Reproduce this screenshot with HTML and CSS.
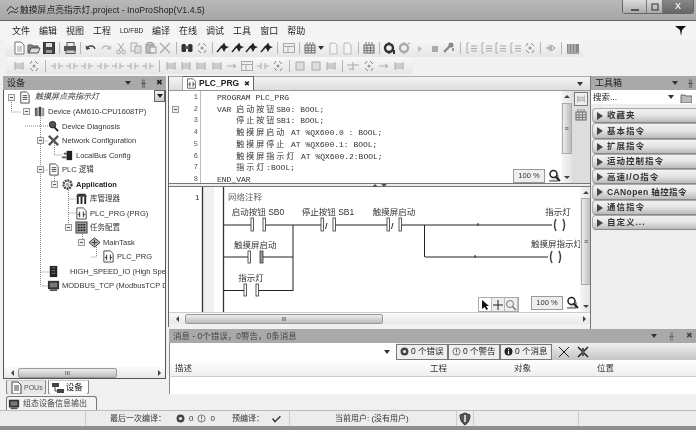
FILE: index.html
```html
<!DOCTYPE html>
<html lang="zh">
<head>
<meta charset="utf-8">
<title>InoProShop</title>
<link rel="stylesheet" href="styles.css">
</head>
<body>
<svg class="defs" width="0" height="0">
  <defs>
    <symbol id="new" viewBox="0 0 14 14"><path d="M3 1h6l3 3v9H3z" fill="#fff" stroke="#777"/><path d="M5 6h5M5 8h5M5 10h5" stroke="#999"/></symbol>
    <symbol id="open" viewBox="0 0 14 14"><path d="M1 4h4l1 1h5v2H4l-2 5H1z" fill="#888" stroke="#555"/><path d="M4 7h9l-2 5H2z" fill="#ddd" stroke="#555"/></symbol>
    <symbol id="save" viewBox="0 0 14 14"><rect x="1.5" y="1.5" width="11" height="11" fill="#444" stroke="#333"/><rect x="4" y="2" width="6" height="4" fill="#ddd"/><rect x="4" y="9" width="6" height="3" fill="#999"/></symbol>
    <symbol id="print" viewBox="0 0 14 14"><rect x="4" y="1.5" width="7" height="4" fill="#eee" stroke="#555"/><rect x="1" y="5" width="12" height="5" fill="#555"/><rect x="3" y="9" width="9" height="3.5" fill="#ccc" stroke="#555"/></symbol>
    <symbol id="undo" viewBox="0 0 14 14"><path d="M3 8a4 3 0 0 1 7-2l1 2" fill="none" stroke="#444" stroke-width="1.4"/><path d="M1.5 4.5l1 4.5 4-1.5z" fill="#444"/></symbol>
    <symbol id="redo" viewBox="0 0 14 14"><path d="M11 8a4 3 0 0 0-7-2L3 8" fill="none" stroke="#bbb" stroke-width="1.4"/><path d="M12.5 4.5l-1 4.5-4-1.5z" fill="#bbb"/></symbol>
    <symbol id="cut" viewBox="0 0 14 14"><path d="M4 2l5 7M10 2L5 9" stroke="#aaa" fill="none"/><circle cx="4.5" cy="11" r="1.8" fill="none" stroke="#aaa"/><circle cx="9.5" cy="11" r="1.8" fill="none" stroke="#aaa"/></symbol>
    <symbol id="copy" viewBox="0 0 14 14"><rect x="2" y="2" width="6" height="8" fill="#eee" stroke="#aaa"/><rect x="6" y="5" width="6" height="7" fill="#ddd" stroke="#aaa"/></symbol>
    <symbol id="paste" viewBox="0 0 14 14"><rect x="2" y="3" width="8" height="9" fill="#bbb" stroke="#999"/><rect x="4" y="1.5" width="4" height="2.5" fill="#ddd" stroke="#999"/><rect x="6" y="6" width="6" height="6" fill="#eee" stroke="#999"/></symbol>
    <symbol id="del" viewBox="0 0 14 14"><path d="M2 2l10 10M12 2L2 12" stroke="#aaa" stroke-width="1.3"/></symbol>
    <symbol id="find" viewBox="0 0 14 14"><rect x="1.5" y="3" width="4.5" height="8" rx="1.5" fill="#333"/><rect x="8" y="3" width="4.5" height="8" rx="1.5" fill="#333"/><rect x="5" y="5" width="4" height="3" fill="#555"/></symbol>
    <symbol id="repl" viewBox="0 0 14 14"><path d="M3 5l2-3M8 2l3 3M3 9l3 3M9 12l2-3" stroke="#888" fill="none"/><circle cx="7" cy="7" r="1.5" fill="#999"/></symbol>
    <symbol id="bp" viewBox="0 0 14 14"><path d="M1 11L7 4" stroke="#222" stroke-width="1.4"/><path d="M8 1.5l1.8 3.5L13 6 9.8 7.5 8 11 6.2 7.5 3.5 6l2.7-1z" fill="#222"/></symbol>
    <symbol id="box" viewBox="0 0 14 14"><rect x="1.5" y="2.5" width="11" height="9" fill="#eee" stroke="#aaa"/><path d="M1.5 5.5h11M6 5.5v6" stroke="#aaa"/></symbol>
    <symbol id="tbl" viewBox="0 0 14 14"><rect x="2" y="4" width="10" height="8" fill="#ddd" stroke="#666"/><path d="M2 7h10M2 9.5h10M5 4v8M8.5 4v8M4 1v3M7 1v3M10 1v3" stroke="#777"/></symbol>
    <symbol id="docb" viewBox="0 0 14 14"><path d="M4 2h5l2 2v9H4z" fill="#f4f4f4" stroke="#bbb"/></symbol>
    <symbol id="gear" viewBox="0 0 14 14"><circle cx="6" cy="7" r="4" fill="none" stroke="#333" stroke-width="2.4"/><path d="M6 1v2M6 11v2M1 7h2M9 7h2M2.5 3.5l1.5 1.5M8 9l1.5 1.5M9.500 3.500L8 5M4 9l-1.500 1.500" stroke="#333" stroke-width="1.300"/><path d="M11 9v4" stroke="#333" stroke-width="2"/></symbol>
    <symbol id="gearl" viewBox="0 0 14 14"><circle cx="6" cy="7" r="4" fill="none" stroke="#aaa" stroke-width="2.400"/><path d="M6 1v2M6 11v2M1 7h2M9 7h2M10 2l2 1" stroke="#aaa" stroke-width="1.300"/></symbol>
    <symbol id="play" viewBox="0 0 14 14"><path d="M5 5l4 3-4 3z" fill="#bbb"/></symbol>
    <symbol id="stop" viewBox="0 0 14 14"><rect x="4" y="5" width="6" height="6" fill="#aaa"/></symbol>
    <symbol id="tool" viewBox="0 0 14 14"><path d="M2 11L8 5" stroke="#888" stroke-width="2.400"/><circle cx="9" cy="4" r="2.500" fill="#888"/><rect x="10" y="7" width="2" height="3" fill="#999"/></symbol>
    <symbol id="brk" viewBox="0 0 14 14"><path d="M5 2H3v10h2M7 5h6M7 7.500h6M7 10h6" fill="none" stroke="#aaa"/></symbol>
    <symbol id="arr" viewBox="0 0 14 14"><path d="M2 7h6M5 4.500v5M7 4l4 3-4 3z" fill="none" stroke="#999"/></symbol>
    <symbol id="bars" viewBox="0 0 14 14"><rect x="1" y="3" width="12" height="8" fill="#888"/><path d="M3 3v8M6 3v8M9 3v8" stroke="#ccc"/><path d="M1 12h12" stroke="#555"/></symbol>
    <symbol id="ct" viewBox="0 0 14 14"><path d="M1 7h4M9 7h4M5 4v6M9 4v6" stroke="#aaa" fill="none"/></symbol>
    <symbol id="rung" viewBox="0 0 14 14"><path d="M3 3v8M3 5h8M3 7h8M3 9h8M11 3v8" stroke="#aaa" fill="none"/></symbol>
    <symbol id="line" viewBox="0 0 14 14"><path d="M2 7h9M8 5l3 2-3 2" stroke="#aaa" fill="none"/></symbol>
    <symbol id="sq" viewBox="0 0 14 14"><rect x="3" y="3" width="8" height="8" fill="#ddd" stroke="#aaa"/></symbol>
    <symbol id="tee" viewBox="0 0 14 14"><path d="M1 6h12M7 3v8M3 10h5" stroke="#aaa" fill="none"/></symbol>
    <symbol id="mon" viewBox="0 0 14 14"><rect x="1" y="2" width="12" height="9" fill="#333"/><rect x="3" y="4" width="8" height="5" fill="#777"/><rect x="3" y="11" width="8" height="2" fill="#555"/></symbol>
    <symbol id="gr" viewBox="0 0 14 14"><rect x="2" y="3" width="3" height="9" fill="#666"/><rect x="6" y="2" width="3" height="10" fill="#444"/><rect x="10" y="3" width="2" height="9" fill="#888"/></symbol>
    <symbol id="doc" viewBox="0 0 14 14"><path d="M3 1h6l3 3v9H3z" fill="#fff" stroke="#444"/><path d="M5 5h5M5 7h5M5 9h5" stroke="#444"/></symbol>
    <symbol id="net" viewBox="0 0 14 14"><path d="M2 12L12 2M2 2l10 10" stroke="#555" stroke-width="2.500"/></symbol>
    <symbol id="devs" viewBox="0 0 14 14"><rect x="1" y="2" width="7" height="4" fill="#444"/><rect x="6" y="8" width="7" height="4" fill="#444"/><path d="M4 6v4h2" stroke="#444" fill="none"/></symbol>
    <symbol id="cog" viewBox="0 0 14 14"><circle cx="7" cy="7" r="4.300" fill="none" stroke="#444" stroke-width="2.500" stroke-dasharray="2 .8"/><circle cx="7" cy="7" r="2" fill="#aaa"/></symbol>
    <symbol id="lens" viewBox="0 0 14 14"><circle cx="6" cy="5" r="3.500" fill="#555" stroke="#222"/><path d="M8 8l4 4" stroke="#222" stroke-width="2"/></symbol>
    <symbol id="plug" viewBox="0 0 14 14"><rect x="6" y="2" width="6" height="10" fill="#222"/><path d="M1 9h5M3 5h3" stroke="#555" stroke-width="2"/></symbol>
    <symbol id="lib" viewBox="0 0 14 14"><path d="M1 5l2-3h8l2 3z" fill="#333"/><path d="M2 5h2v8H2zM6 5h2v8H6zM10 5h2v8h-2z" fill="#222"/></symbol>
    <symbol id="prg" viewBox="0 0 14 14"><path d="M2 1h7l3 3v9H2z" fill="#fff" stroke="#444"/><path d="M3 8h2M9 8h2M5 5v6M9 5v6" stroke="#222"/></symbol>
    <symbol id="tasks" viewBox="0 0 14 14"><rect x="1" y="1" width="12" height="12" fill="#999" stroke="#444"/><path d="M3 4h8M3 7h8M3 10h8" stroke="#222" stroke-width="1.500" stroke-dasharray="2 1"/></symbol>
    <symbol id="task" viewBox="0 0 14 14"><path d="M1 7l6-5 6 5-6 5z" fill="#bbb" stroke="#333"/><path d="M4 7h6M7 4v6" stroke="#333"/></symbol>
    <symbol id="stk" viewBox="0 0 14 14"><rect x="3" y="1" width="8" height="12" fill="#222"/><path d="M5 3h4M5 6h4M5 9h4" stroke="#777"/></symbol>
    <symbol id="zm" viewBox="0 0 14 14"><path d="M2 12h9V6" fill="#ddd" stroke="#444"/><circle cx="6.500" cy="5" r="3.500" fill="#fff" stroke="#222" stroke-width="1.500"/><path d="M9 8l4 4" stroke="#222" stroke-width="2"/></symbol>
    <symbol id="err" viewBox="0 0 14 14"><circle cx="7" cy="7" r="5" fill="#444"/><circle cx="7" cy="7" r="2" fill="#eee"/></symbol>
    <symbol id="warn" viewBox="0 0 14 14"><circle cx="7" cy="7" r="4.500" fill="#eee" stroke="#555"/><path d="M7 4v4M7 9v1" stroke="#444"/></symbol>
    <symbol id="info" viewBox="0 0 14 14"><circle cx="7" cy="7" r="5" fill="#222"/><path d="M7 3.500v1.500M7 6v4.500" stroke="#fff" stroke-width="1.500"/></symbol>
  </defs>
</svg>

<div class="app">
  <header class="title">
    <svg class="i" viewBox="0 0 14 14"><path d="M2 8q3-7 6-3t5-1M3 11q3-4 6-2t4-1" fill="none" stroke="#333"/></svg>
    <span class="title-text">触摸屏点亮指示灯.project - InoProShop(V1.4.5)</span>
    <div class="winbtns">
      <span class="wb"><svg viewBox="0 0 10 10"><path d="M1 8h8" stroke="#333" stroke-width="1.500"/></svg></span>
      <span class="wb mid"><svg viewBox="0 0 10 10"><rect x="2" y="2" width="6" height="6" fill="none" stroke="#333"/></svg></span>
      <span class="wb close">X</span>
    </div>
  </header>

  <nav class="menu">
    <span>文件</span><span>编辑</span><span>视图</span><span>工程</span><span class="small">LD/FBD</span><span>编译</span><span>在线</span><span>调试</span><span>工具</span><span>窗口</span><span>帮助</span>
    <svg class="funnel" viewBox="0 0 12 12"><path d="M0 1h11L7 5l-1 6-1-6z" fill="#111"/></svg>
  </nav>

  <div class="tb tb1">
    <svg class="i"><use href="#new"/></svg><svg class="i"><use href="#open"/></svg><svg class="i"><use href="#save"/></svg><b></b>
    <svg class="i"><use href="#print"/></svg><b></b>
    <svg class="i"><use href="#undo"/></svg><svg class="i"><use href="#redo"/></svg><svg class="i"><use href="#cut"/></svg><svg class="i"><use href="#copy"/></svg><svg class="i"><use href="#paste"/></svg><svg class="i"><use href="#del"/></svg><b></b>
    <svg class="i"><use href="#find"/></svg><svg class="i"><use href="#repl"/></svg><b></b>
    <svg class="i"><use href="#bp"/></svg><svg class="i"><use href="#bp"/></svg><svg class="i"><use href="#bp"/></svg><svg class="i"><use href="#bp"/></svg><b></b>
    <svg class="i"><use href="#box"/></svg><b></b>
    <svg class="i"><use href="#tbl"/></svg><i class="drop"></i><svg class="i"><use href="#docb"/></svg><svg class="i"><use href="#docb"/></svg><b></b>
    <svg class="i"><use href="#tbl"/></svg><b></b>
    <svg class="i"><use href="#gear"/></svg><svg class="i"><use href="#gearl"/></svg><svg class="i"><use href="#play"/></svg><svg class="i"><use href="#stop"/></svg><svg class="i"><use href="#tool"/></svg><b></b>
    <svg class="i"><use href="#brk"/></svg><svg class="i"><use href="#brk"/></svg><svg class="i"><use href="#brk"/></svg><svg class="i"><use href="#brk"/></svg><svg class="i"><use href="#repl"/></svg><b></b>
    <svg class="i"><use href="#arr"/></svg><b></b>
    <svg class="i"><use href="#bars"/></svg>
  </div>

  <div class="tb tb2">
    <svg class="i"><use href="#rung"/></svg><svg class="i"><use href="#repl"/></svg><b></b>
    <svg class="i"><use href="#ct"/></svg><svg class="i"><use href="#ct"/></svg><svg class="i"><use href="#ct"/></svg><svg class="i"><use href="#ct"/></svg><svg class="i"><use href="#ct"/></svg><svg class="i"><use href="#ct"/></svg><svg class="i"><use href="#ct"/></svg><b></b>
    <svg class="i"><use href="#rung"/></svg><svg class="i"><use href="#rung"/></svg><svg class="i"><use href="#rung"/></svg><svg class="i"><use href="#rung"/></svg><svg class="i"><use href="#line"/></svg><svg class="i"><use href="#box"/></svg><svg class="i"><use href="#ct"/></svg><svg class="i"><use href="#repl"/></svg><b></b>
    <svg class="i"><use href="#sq"/></svg><svg class="i"><use href="#sq"/></svg><svg class="i"><use href="#rung"/></svg><b></b>
    <svg class="i"><use href="#tee"/></svg><svg class="i"><use href="#repl"/></svg><svg class="i"><use href="#line"/></svg><svg class="i"><use href="#rung"/></svg>
  </div>

  <main class="main">
    <section class="left">
      <div class="phead"><span>设备</span><span class="pctl"><i class="drop"></i><span class="pin">╫</span><span class="x">✖</span></span></div>
      <div class="tree">
        <svg class="tree-lines" width="110" height="210">
          <path d="M7.500 8v14h10M36.500 22v174M21 36h23M36.500 51h8M36.500 80h8M36.500 182h12M36.500 196h8M50.500 51v14h8M50.500 80v14M64.500 94v44M64.500 109h8M64.500 123h8M78.500 138v15M92.500 153v14h-6" fill="none" stroke="#888" stroke-dasharray="1 1"/>
        </svg>
        <div class="row l0"><i class="tg"></i><svg class="i"><use href="#doc"/></svg><em class="root">触摸屏点亮指示灯</em></div>
        <div class="row l1"><i class="tg"></i><svg class="i"><use href="#gr"/></svg><span>Device (AM610-CPU1608TP)</span></div>
        <div class="row l2"><i class="tg none"></i><svg class="i"><use href="#lens"/></svg><span>Device Diagnosis</span></div>
        <div class="row l2"><i class="tg"></i><svg class="i"><use href="#net"/></svg><span>Network Configuration</span></div>
        <div class="row l3"><i class="tg none"></i><svg class="i"><use href="#plug"/></svg><span>LocalBus Config</span></div>
        <div class="row l2"><i class="tg"></i><svg class="i"><use href="#doc"/></svg><span>PLC 逻辑</span></div>
        <div class="row l3"><i class="tg"></i><svg class="i"><use href="#cog"/></svg><strong>Application</strong></div>
        <div class="row l4"><i class="tg none"></i><svg class="i"><use href="#lib"/></svg><span>库管理器</span></div>
        <div class="row l4"><i class="tg none"></i><svg class="i"><use href="#prg"/></svg><span>PLC_PRG (PRG)</span></div>
        <div class="row l4"><i class="tg"></i><svg class="i"><use href="#tasks"/></svg><span>任务配置</span></div>
        <div class="row l5"><i class="tg"></i><svg class="i"><use href="#task"/></svg><span>MainTask</span></div>
        <div class="row l6"><i class="tg none"></i><svg class="i"><use href="#prg"/></svg><span>PLC_PRG</span></div>
        <div class="row l2x"><i class="tg none"></i><svg class="i"><use href="#stk"/></svg><span>HIGH_SPEED_IO (High Speed IO Module)</span></div>
        <div class="row l2"><i class="tg none"></i><svg class="i"><use href="#mon"/></svg><span>MODBUS_TCP (ModbusTCP Device)</span></div>
        <i class="tree-drop"></i>
      </div>
      <div class="hscroll hs-left"><i class="la"></i><div class="thumb">III</div><i class="ra"></i></div>
      <div class="ltabs">
        <span class="ltab"><svg class="i"><use href="#doc"/></svg><small>POUs</small></span>
        <span class="ltab on"><svg class="i"><use href="#devs"/></svg>设备</span>
      </div>
    </section>

    <section class="center">
      <div class="tabstrip">
        <div class="tab"><svg class="i"><use href="#prg"/></svg><b>PLC_PRG</b><span class="tx">✖</span></div>
        <i class="drop end"></i>
      </div>
      <div class="code-pane">
        <div class="fold"><i class="tg"></i></div>
        <ol class="nums"><li>1</li><li>2</li><li>3</li><li>4</li><li>5</li><li>6</li><li>7</li><li>8</li></ol>
        <pre class="code">PROGRAM PLC_PRG
VAR <span class="cj">启动按钮</span>SB0: BOOL;
    <span class="cj">停止按钮</span>SB1: BOOL;
    <span class="cj">触摸屏启动</span> AT %QX600.0 : BOOL;
    <span class="cj">触摸屏停止</span> AT %QX600.1: BOOL;
    <span class="cj">触摸屏指示灯</span> AT %QX600.2:BOOL;
    <span class="cj">指示灯</span>:BOOL;
END_VAR</pre>
        <div class="vscroll vs-top"><i class="ua"></i><div class="vthumb">≡</div><i class="da"></i></div>
        <div class="side">
          <svg class="i sbtn"><use href="#rung"/></svg>
          <svg class="i"><use href="#tbl"/></svg>
        </div>
        <div class="zoombox zb-top"><span>100 %</span><svg class="i"><use href="#zm"/></svg></div>
      </div>
      <div class="divider"><i></i><i class="dn"></i></div>
      <div class="ladder">
        <svg class="lad" width="422" height="126" viewBox="169 185 422 126">
          <rect x="203" y="185" width="11" height="126" fill="#f0f0f0"/>
          <path d="M202.500 185v125M223.500 185v126" stroke="#333" stroke-width="1.300"/>
          <text x="195" y="198" class="ln">1</text>
          <text x="228" y="198" class="lb gray">网络注释</text>
          <text x="258" y="213" class="lb c">启动按钮 SB0</text>
          <text x="328" y="213" class="lb c">停止按钮 SB1</text>
          <text x="394" y="213" class="lb c">触摸屏启动</text>
          <text x="558" y="213" class="lb c">指示灯</text>
          <text x="531" y="245" class="lb">触摸屏指示灯</text>
          <text x="234" y="246" class="lb">触摸屏启动</text>
          <text x="251" y="279" class="lb c">指示灯</text>
          <path d="M224 223h28M264 223h58M334 223h54M400 223h152M424.500 223v32M425 255h123M224 255h24M262 255h31M224 288.500h21M258 288.500h35M293 223v66" fill="none" stroke="#222"/>
          <path d="M478 221v3M475 253v3" stroke="#222"/>
          <g class="bar"><rect x="251" y="216" width="2.500" height="13"/><rect x="263" y="216" width="2.500" height="13"/><rect x="321" y="216" width="2.500" height="13"/><rect x="333" y="216" width="2.500" height="13"/><rect x="387" y="216" width="2.500" height="13"/><rect x="399" y="216" width="2.500" height="13"/><rect x="248" y="249" width="2.500" height="12"/><rect x="260" y="249" width="3" height="12" class="thick"/><rect x="244" y="282" width="2.500" height="12"/><rect x="256" y="282" width="2.500" height="12"/></g>
          <path d="M327 221l-1.500 6M393 221l-1.500 6" stroke="#333"/>
          <path d="M556 217q-3 6 0 12M563 217q3 6 0 12M552 249q-3 6 0 12M559 249q3 6 0 12" fill="none" stroke="#444" stroke-width="1.500"/>
        </svg>
        <div class="vscroll vs-lad"><i class="ua"></i><div class="vthumb">≡</div><i class="da"></i></div>
        <div class="mode"><span class="on"><svg viewBox="0 0 12 12" width="12" height="12"><path d="M3 1v9l2.500-2 2 3 1.500-1-2-3h3z" fill="#111"/></svg></span><span><svg viewBox="0 0 12 12" width="12" height="12"><path d="M6 1v10M1 6h10" stroke="#222"/></svg></span><span><svg viewBox="0 0 12 12" width="12" height="12"><circle cx="5" cy="5" r="3.500" fill="#eee" stroke="#777"/><path d="M7.500 7.500l3.500 3.500" stroke="#777" stroke-width="1.500"/></svg></span></div>
        <div class="zoombox zb-lad"><span>100 %</span><svg class="i"><use href="#zm"/></svg></div>
      </div>
      <div class="hscroll hs-lad"><i class="la"></i><div class="thumb">III</div><i class="ra"></i></div>
    </section>

    <aside class="right">
      <div class="phead"><span>工具箱</span><span class="pctl"><i class="drop"></i><span class="pin">╫</span></span></div>
      <div class="search"><span>搜索...</span><i class="drop"></i><svg class="i"><path d="M1 4h4l1 1h6v7H1z" fill="#bbb" stroke="#666"/></svg></div>
      <ul class="tools">
        <li>收藏夹</li><li>基本指令</li><li>扩展指令</li><li>运动控制指令</li><li>高速I/O指令</li><li class="tight">CANopen 轴控指令</li><li>通信指令</li><li>自定义...</li>
      </ul>
    </aside>

    <section class="msgs">
      <div class="phead mh"><span>消息 - 0个错误，0警告，0条消息</span><span class="pctl"><i class="drop"></i><span class="pin">╫</span><span class="x">✖</span></span></div>
      <div class="mtool">
        <div class="mcombo"><i class="drop"></i></div>
        <div class="mbtns">
          <span class="mb"><svg class="i"><use href="#err"/></svg>0 个错误</span>
          <span class="mb"><svg class="i"><use href="#warn"/></svg>0 个警告</span>
          <span class="mb"><svg class="i"><use href="#info"/></svg>0 个消息</span>
          <svg class="i mx"><path d="M2 2l10 10M12 2L2 12" stroke="#222"/></svg>
          <svg class="i mx"><path d="M2 2l10 10M12 2L2 12" stroke="#222" stroke-width="1.500"/><path d="M7 3v8" stroke="#555" stroke-width="2"/></svg>
        </div>
      </div>
      <div class="mhead"><span class="c1">描述</span><span class="c2">工程</span><span class="c3">对象</span><span class="c4">位置</span></div>
      <div class="mbody"></div>
    </section>
  </main>

  <div class="outbar"><span class="otab"><svg class="i"><use href="#mon"/></svg>组态设备信息输出</span></div>

  <footer class="status">
    <div class="s1"></div>
    <div class="s2"><span>最后一次编译：</span><svg class="i"><use href="#err"/></svg><span>0</span><svg class="i"><use href="#warn"/></svg><span>0</span><span class="pre">预编译：</span><svg class="i" viewBox="0 0 14 14"><path d="M2 7l3 4 7-7" fill="none" stroke="#333" stroke-width="1.800"/></svg></div>
    <div class="s3"><span>当前用户: (没有用户)</span></div>
    <div class="s4"><svg class="i" viewBox="0 0 14 14"><path d="M7 1l5 2q0 7-5 10Q2 10 2 3z" fill="#555" stroke="#333"/><path d="M7 3v7" stroke="#ccc" stroke-width="2"/></svg></div>
    <div class="s5"></div>
    <div class="s6"></div>
  </footer>
</div>
</body>
</html>
```

FILE: styles.css
```css
* { box-sizing: border-box; }
html, body { margin: 0; padding: 0; background: #9a9a9a; }
.defs { position: absolute; }
.app {
  width: 696px; height: 430px; overflow: hidden;
  display: flex; flex-direction: column;
  background: #f1f1f1;
  font: 8.500px/1 "Liberation Sans", "Noto Sans CJK SC", sans-serif;
  color: #333;
  filter: blur(0.35px);
  border-bottom: 4px solid #8e8e8e;
}
i { font-style: normal; display: block; }
.i { width: 14px; height: 14px; flex: none; display: block; }

.drop { width: 0; height: 0; border: 3px solid transparent; border-top: 4px solid #333; border-bottom: 0; flex: none; }

/* title */
.title { height: 21px; flex: none; display: flex; align-items: center; padding-left: 5px; gap: 1px;
  background: linear-gradient(#b9b9b9, #a6a6a6); border-bottom: 1px solid #666; position: relative; }
.title-text { font-size: 8.800px; color: #222; margin-left: 0; white-space: nowrap; }
.winbtns { margin-left: auto; margin-right: 2px; display: flex; align-self: flex-start; border: 1px solid #666; border-top: 0; border-radius: 0 0 3px 3px; height: 14px; }
.wb { width: 24px; height: 13px; display: flex; align-items: center; justify-content: center; background: linear-gradient(#dcdcdc, #aaa); border-right: 1px solid #777; }
.wb.mid { width: 16px; }
.wb svg { width: 10px; height: 10px; }
.wb.close { width: 30px; border: 0; background: linear-gradient(#888, #666); color: #eee; font-size: 9px; font-weight: bold; }

/* menu */
.menu { height: 18px; flex: none; display: flex; align-items: center; padding-left: 12px; gap: 9px; font-size: 9px; color: #222; background: #f4f4f4; position: relative; padding-top: 3px; }
.menu .small { font-size: 6.500px; width: 23px; }
.funnel { width: 12px; height: 12px; margin-left: auto; margin-right: 9px; margin-top: -2px; }

/* toolbars */
.tb { flex: none; display: flex; align-items: center; background: linear-gradient(#f8f8f8, #e6e6e6); margin-left: 6px; border-radius: 2px; gap: .8px; padding-left: 6px; }
.tb b { width: 1px; height: 12px; background: #b5b5b5; margin: 0 2.400px; flex: none; }
.tb1 { height: 18px; width: 577px; }
.tb1 .drop { margin-right: 1px; }
.tb2 { height: 17px; width: 407px; margin-bottom: 2px; gap: 1.300px; }

/* main grid */
.main { flex: 1; min-height: 0; margin-left: 3px; display: grid;
  grid-template-columns: 163px 424px 106px; grid-template-rows: 253px 66px; column-gap: 0; }
.phead { height: 14px; background: #a9a9a9; display: flex; align-items: center; padding: 0 3px 0 4px; color: #222; font-size: 9px; flex: none; }
.pctl { margin-left: auto; display: flex; align-items: center; gap: 10px; font-size: 8px; }
.pin { font-size: 7px; }
.x { font-size: 8px; }

/* left */
.left { grid-row: 1 / 3; grid-column: 1; display: flex; flex-direction: column; }
.tree { height: 277px; background: #fff; border-left: 1px solid #555; border-right: 1px solid #555; position: relative; overflow: hidden; padding-top: 0; }
.tree-lines { position: absolute; left: 0; top: 0; }
.tree-drop { position: absolute; right: 0; top: 0; width: 11px; height: 12px; border: 1px solid #666; background: linear-gradient(#eee,#ccc); }
.tree-drop::after { content: ""; position: absolute; left: 2px; top: 3px; border: 3px solid transparent; border-top: 4px solid #222; border-bottom: 0; }
.row { height: 14.530px; display: flex; align-items: center; white-space: nowrap; position: relative; font-size: 7.500px; color: #333; }
.row .i { width: 13px; height: 13px; }
.row span, .row strong, .row em { margin-left: 2px; }
.row strong { color: #222; }
.root { font-size: 8px; }
.l0 { padding-left: 4px; }
.l0 em { margin-left: 4px; }
.l1 { padding-left: 19px; }
.l2 { padding-left: 33px; }
.l2x { padding-left: 33px; }
.l2x span { margin-left: 10px; }
.l3 { padding-left: 47px; }
.l4 { padding-left: 61px; }
.l5 { padding-left: 74px; }
.l6 { padding-left: 88px; }
.tg { width: 7px; height: 7px; border: 1px solid #999; background: #eee; margin-right: 3px; position: relative; flex: none; }
.tg::after { content: ""; position: absolute; left: 1px; right: 1px; top: 2px; height: 1px; background: #555; }
.tg.none { visibility: hidden; }

.hscroll { display: flex; align-items: center; height: 11px; background: linear-gradient(#fafafa, #e8e8e8); flex: none; }
.hs-left { border: 1px solid #555; border-top: 0; height: 12px; }
.la { border: 3px solid transparent; border-right: 3px solid #444; border-left: 0; margin-left: 7px; }
.ra { border: 3px solid transparent; border-left: 3px solid #444; border-right: 0; margin-left: auto; margin-right: 4px; }
.thumb { height: 10px; border: 1px solid #999; border-radius: 2px; background: linear-gradient(#eee, #bbb); font-size: 6px; line-height: 9px; text-align: center; color: #444; }
.hs-left .thumb { width: 99px; margin-left: 4px; }
.hs-lad { position: relative; }
.hs-lad .thumb { width: 198px; margin-left: 6px; }

.ltabs { display: flex; gap: 2px; padding: 1px 0 0 3px; }
.ltab { height: 15px; display: flex; align-items: center; gap: 1px; border: 1px solid #888; border-top-color: #ccc; border-radius: 0 0 3px 3px; padding: 0 2px; font-size: 8.500px; background: #e8e8e8; color: #222; }
.ltab small { font-size: 7px; color: #555; }
.ltab.on { background: #fff; padding-right: 5px; }

/* center */
.center { grid-column: 2; grid-row: 1; margin-left: 2px; border-left: 1px solid #666; display: flex; flex-direction: column; height: 251px; width: 422px; }
.tabstrip { height: 15px; background: linear-gradient(#f4f4f4, #ddd); border-top: 1px solid #aaa; border-bottom: 1px solid #999; display: flex; align-items: flex-end; padding-left: 13px; flex: none; }
.tab { height: 14px; display: flex; align-items: center; gap: 2px; padding: 0 3px 0 3px; background: #fff; border: 1px solid #666; border-bottom: 0; border-left-color: #aaa; font-size: 8.500px; color: #222; }
.tab .i { width: 11px; height: 11px; }
.tx { font-size: 7px; margin-left: 3px; }
.drop.end { margin-left: auto; margin-right: 7px; align-self: center; }

.code-pane { height: 93px; flex: none; display: flex; background: #fff; position: relative; border-bottom: 1px solid #777; overflow: hidden; }
.fold { width: 7px; margin-left: 3px; padding-top: 15px; }
.fold .tg { margin: 0; }
.nums { margin: 0; padding: 1px 2px 0 0; list-style: none; width: 22px; border-right: 1px solid #bbb; text-align: right; font: 7px/11.700px "Liberation Mono", monospace; color: #555; flex: none; }
.code { margin: 1px 0 0 16px; font: 8px/11.700px "Liberation Mono", "Noto Sans CJK SC", monospace; color: #333; flex: 1; }
.cj { letter-spacing: 2px; font-family: "Noto Sans CJK SC", sans-serif; line-height: 1; }
.vscroll { display: flex; flex-direction: column; align-items: center; background: linear-gradient(90deg, #f6f6f6, #e2e2e2); width: 11px; flex: none; }
.ua { border: 3px solid transparent; border-bottom: 3px solid #444; border-top: 0; margin-top: 4px; }
.da { border: 3px solid transparent; border-top: 3px solid #444; border-bottom: 0; margin-top: auto; margin-bottom: 4px; }
.vthumb { width: 10px; border: 1px solid #aaa; background: linear-gradient(90deg, #eee, #bbb); display: flex; align-items: center; justify-content: center; font-size: 7px; color: #444; }
.vs-top .vthumb { height: 51px; margin-top: 5px; }
.side { width: 18px; flex: none; display: flex; flex-direction: column; align-items: center; gap: 2px; padding-top: 1px; background: #ddd; }
.sbtn { border: 1px solid #777; background: #eee; }
.zoombox { position: absolute; display: flex; align-items: center; height: 14px; gap: 2px; }
.zoombox span { width: 32px; height: 14px; border: 1px solid #999; background: #eee; text-align: center; font-size: 7.500px; line-height: 12px; color: #333; }
.zb-top { right: 29px; bottom: 0; }
.zb-lad { right: 11px; bottom: 2px; }
.divider { height: 3px; background: #eee; border-bottom: 1px solid #777; flex: none; display: flex; justify-content: center; gap: 3px; padding-right: 0; }
.divider i { width: 0; height: 0; border: 3px solid transparent; border-bottom: 3px solid #555; border-top: 0; }
.divider .dn { border-top: 3px solid #555; border-bottom: 0; }

.ladder { height: 126px; flex: none; position: relative; display: flex; background: #fff; border-bottom: 1px solid #ccc; overflow: hidden; }
.lad { flex: none; display: block; margin-right: -11px; }
.ln { font: 8px "Liberation Sans", sans-serif; fill: #333; }
.lb { font: 8.500px "Liberation Sans", "Noto Sans CJK SC", sans-serif; fill: #333; }
.lb.gray { fill: #666; }
.c { text-anchor: middle; }
.bar rect { fill: #fff; stroke: #333; stroke-width: .8; }
.bar .thick { fill: #999; }
.vs-lad { width: 12px; margin-left: auto; position: relative; }
.vs-lad .vthumb { height: 87px; margin-top: 4px; }
.mode { position: absolute; left: 309px; bottom: 0; display: flex; height: 15px; border: 1px solid #aaa; background: #eee; }
.mode span { width: 13px; display: flex; align-items: center; justify-content: center; border-right: 1px solid #bbb; }
.mode .on { background: #fff; }

/* right */
.right { grid-column: 3; grid-row: 1; background: #eee; border-left: 1px solid #777; display: flex; flex-direction: column; margin-left: 0; height: 253px; }
.search { height: 14px; background: #fff; display: flex; align-items: center; padding-left: 2px; font-size: 8.500px; color: #222; flex: none; }
.search .drop { margin-left: auto; margin-right: 6px; }
.search .i { margin-right: 4px; width: 12px; height: 12px; }
.tools { list-style: none; margin: 4px 0 0 1px; padding: 0; }
.tools li { height: 15.300px; border: 1px solid #aaa; border-right: 0; border-bottom-color: #888; border-radius: 4px 0 0 4px; background: linear-gradient(#f2f2f2, #e6e6e6 45%, #bbb); display: flex; align-items: center; padding-left: 14px; font-weight: bold; font-size: 8.500px; letter-spacing: 1px; color: #333; position: relative; white-space: nowrap; }
.tools li.tight { letter-spacing: .4px; }
.tools li::before { content: ""; position: absolute; left: 4px; top: 3px; border: 4px solid transparent; border-left: 6px solid #444; border-right: 0; }

/* messages */
.msgs { grid-column: 2 / 4; grid-row: 2; margin-left: 3px; display: flex; flex-direction: column; width: 527px; margin-top: 0; }
.mh { padding-right: 3px; color: #444; font-size: 8.500px; padding-left: 4px; }
.mh .pctl { gap: 12px; }
.mtool { height: 17px; display: flex; flex: none; background: #fff; border-left: 1px solid #888; }
.mcombo { width: 226px; display: flex; align-items: center; justify-content: flex-end; padding-right: 6px; }
.mbtns { flex: 1; display: flex; align-items: center; background: linear-gradient(#f0f0f0, #c4c4c4); padding-left: 0; }
.mb { height: 16px; width: 52px; border: 1px solid #777; display: flex; align-items: center; gap: 1px; font-size: 8.500px; background: #eee; color: #222; white-space: nowrap; }
.mb .i { width: 11px; height: 11px; margin-left: 2px; }
.mx { margin-left: 5px; }
.mhead { height: 17px; position: relative; display: grid; grid-template-columns: 260px 84px 83px 100px; align-items: center; background: linear-gradient(#fff, #eee); border-left: 1px solid #888; border-bottom: 1px solid #ccc; flex: none; font-size: 8.500px; color: #333; }
.mhead .c1 { padding-left: 5px; }
.mbody { height: 18px; background: #fff; border-left: 1px solid #888; border-bottom: 1px solid #999; flex: none; }

/* bottom */
.outbar { height: 16px; flex: none; padding: 2px 0 0 6px; background: #f0f0f0; }
.otab { height: 14px; width: 91px; display: flex; align-items: center; gap: 3px; border: 1px solid #777; border-bottom: 0; border-radius: 3px 3px 0 0; background: #f4f4f4; font-size: 8px; color: #444; padding-left: 1px; white-space: nowrap; }
.otab .i { width: 12px; height: 12px; }
.status { height: 16px; flex: none; display: flex; align-items: center; background: #ececec; border-top: 1px solid #bbb; font-size: 8px; color: #333; padding-left: 3px; }
.status > div { height: 100%; display: flex; align-items: center; border-right: 1px solid #ccc; white-space: nowrap; }
.s1 { width: 83px; }
.s2 { width: 204px; padding-left: 24px; gap: 3px; }
.s2 .i { width: 11px; height: 11px; }
.s2 > span:first-child { margin-right: 6px; }
.pre { margin-left: 14px; margin-right: 4px; }
.s3 { width: 167px; padding-left: 45px; }
.s4 { width: 17px; justify-content: center; }
.s5 { width: 105px; }
.s6 { flex: 1; border-right: 0 !important; }
```
